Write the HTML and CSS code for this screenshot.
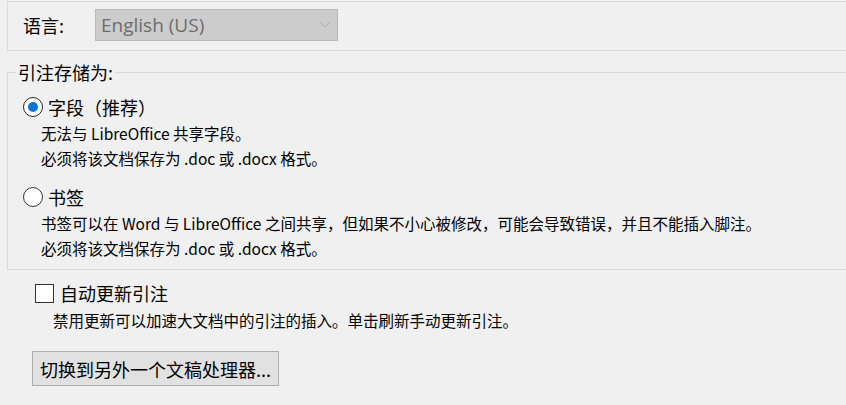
FILE: index.html
```html
<!DOCTYPE html>
<html lang="zh-CN">
<head>
<meta charset="utf-8">
<title>引注设置</title>
<link rel="stylesheet" href="styles.css">
</head>
<body>
<div class="page">
  <div class="lang-box">
    <span class="lang-label">语言:</span>
    <div class="select">
      <span class="select-text">English (US)</span>
      <svg class="chevron" width="10" height="6" viewBox="0 0 10 6"><path d="M0.5 0.5 L5 5 L9.5 0.5" fill="none" stroke="#a8a8a8" stroke-width="1"/></svg>
    </div>
  </div>

  <fieldset class="group">
    <legend class="group-title">引注存储为:</legend>
    <div class="option">
      <span class="radio checked"></span>
      <span class="opt-label">字段（推荐）</span>
    </div>
    <p class="desc first">无法与 LibreOffice 共享字段。</p>
    <p class="desc">必须将该文档保存为 .doc 或 .docx 格式。</p>
    <div class="option second">
      <span class="radio"></span>
      <span class="opt-label">书签</span>
    </div>
    <p class="desc first">书签可以在 Word 与 LibreOffice 之间共享，但如果不小心被修改，可能会导致错误，并且不能插入脚注。</p>
    <p class="desc">必须将该文档保存为 .doc 或 .docx 格式。</p>
  </fieldset>

  <div class="auto">
    <div class="check-row">
      <span class="checkbox"></span>
      <span class="opt-label">自动更新引注</span>
    </div>
    <p class="auto-desc">禁用更新可以加速大文档中的引注的插入。单击刷新手动更新引注。</p>
  </div>

  <button class="switch" type="button">切换到另外一个文稿处理器...</button>
</div>
</body>
</html>
```

FILE: styles.css
```css
html, body {
  margin: 0;
  padding: 0;
  background: #f0f0f0;
}
body {
  font-family: "Noto Sans CJK SC", "Noto Sans", sans-serif;
  color: #000;
}
.page {
  display: flex;
  flex-direction: column;
  align-items: flex-start;
}
.lang-box {
  box-sizing: border-box;
  align-self: stretch;
  margin: 1px 0 0 7px;
  height: 50px;
  border: 1px solid #dadada;
  border-right: none;
  display: flex;
  align-items: center;
  padding: 0 0 3px 15px;
}
.lang-label {
  font-size: 18px;
  width: 72px;
}
.select {
  box-sizing: border-box;
  width: 243px;
  height: 32px;
  background: #cccccc;
  border: 1px solid #b9b9b9;
  display: flex;
  align-items: center;
  justify-content: space-between;
  padding: 0 7px 0 5px;
}
.select-text {
  font-size: 19px;
  color: #6d6d6d;
  font-family: "Open Sans", "Noto Sans CJK SC", sans-serif;
}
.chevron { display: block; }

.group {
  box-sizing: border-box;
  align-self: stretch;
  margin: 11px 0 0 7px;
  padding: 13px 0 8px 8px;
  border: 1px solid #dadada;
  border-right: none;
  min-width: 0;
}
.group-title {
  font-size: 18px;
  line-height: 20px;
  padding: 0 2px;
}
.option {
  display: flex;
  align-items: center;
  height: 24px;
  padding-left: 7px;
}
.option.second { margin-top: 14px; }
.radio {
  box-sizing: border-box;
  width: 20px;
  height: 20px;
  border-radius: 50%;
  border: 1px solid #333;
  background: #fff;
  margin-right: 5px;
  display: flex;
  align-items: center;
  justify-content: center;
}
.radio.checked { border: 1.5px solid #222; }
.radio.checked::after {
  content: "";
  width: 10px;
  height: 10px;
  border-radius: 50%;
  background: #0a74d8;
}
.opt-label {
  font-size: 18px;
  line-height: 24px;
}
.desc {
  margin: 0 0 0 25px;
  font-size: 15.5px;
  line-height: 25px;
}
.desc.first { margin-top: 2px; }

.auto {
  margin: 11px 0 0 35px;
}
.check-row {
  display: flex;
  align-items: center;
  height: 24px;
}
.checkbox {
  box-sizing: border-box;
  width: 19px;
  height: 19px;
  border: 1px solid #333;
  background: #fff;
  margin-right: 6px;
}
.auto-desc {
  margin: 3px 0 0 18px;
  font-size: 15.5px;
  line-height: 25px;
}
.switch {
  box-sizing: border-box;
  margin: 18px 0 0 32px;
  width: 247px;
  height: 35px;
  background: #e1e1e1;
  border: 1px solid #adadad;
  font-family: inherit;
  font-size: 18px;
  color: #000;
  padding: 0;
}
```
